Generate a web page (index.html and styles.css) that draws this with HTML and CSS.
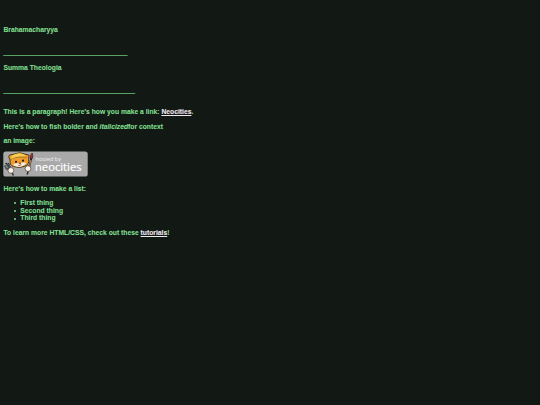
FILE: index.html
```html
<!DOCTYPE html>
<html lang="en">
<head>
    <meta charset="UTF-8">
    <meta name="viewport" content="width=device-width, initial-scale=1.0">
    <title>Brahamacharyya</title>
    <link rel="stylesheet" href="styles.css">
</head>
<body>
    <div class="entry">
        <h1>Brahamacharyya</h1>
        <p class="line">_________________________________</p>
    </div>
    <div class="entry">
        <h1>Summa Theologia</h1>
        <p class="line">___________________________________</p>
    </div>

    <p class="intro">This is a paragraph! Here's how you make a link: <a href="#">Neocities</a>.</p>
    <p>Here's how to fish bolder and <em>italicized</em>for context</p>
    <p>an image:</p>

    <svg class="badge" viewBox="0 0 85 26">
        <rect x="0.3" y="0.4" width="84.4" height="25.2" rx="2.6" fill="#a9a9a9"/>
        <!-- fork -->
        <path d="M2.8 12l4 6M1.8 14.5l1.5 3.2 3.2 1M5.2 12l2 4.5" fill="none" stroke="#182022" stroke-width="1.5"/>
        <path d="M3 12.8l3.6 5M2 15l1.4 3 3 .9M5.3 12.5l1.7 4" fill="none" stroke="#8795a0" stroke-width=".6"/>
        <!-- brush -->
        <path d="M28.6 6L26 17" stroke="#20191a" stroke-width="1.8"/>
        <path d="M27.9 9L26.3 16" stroke="#c98b4c" stroke-width="1"/>
        <path d="M27.1 7.5Q27 3.5 29.2 2Q30.8 5 28.9 8z" fill="#b92832" stroke="#241416" stroke-width=".6"/>
        <!-- cat -->
        <path d="M6.5 8Q5 5.5 6.5 4L11.5 3Q17 .5 21.5 3L26 4L25.6 8.5Q26.5 13.2 22 15.2Q16.5 17.6 10.5 15.6Q6.5 14 7.2 10z" fill="#ef9c2d" stroke="#30200e" stroke-width=".8"/>
        <path d="M8 8.3Q7.8 4.2 12 3.2Q18 1 22 4.2L23.3 6.4Q17 4.6 8 9z" fill="#f6ce52"/>
        <path d="M6.5 9.3Q14 4.6 23.8 6.4" fill="none" stroke="#95601b" stroke-width=".8"/>
        <path d="M10 13.3Q13 11.9 16 12.5Q20.5 10.8 23.3 12Q21.5 15 16.5 15.9Q12 16 10 13.3z" fill="#f6eee1"/>
        <circle cx="13" cy="10.8" r="1.1" fill="#241b18"/>
        <circle cx="20" cy="9.7" r="1.1" fill="#241b18"/>
        <path d="M15.9 12.1l1.9-.3-.7 1.1zM14.9 14.2q2 .8 3.6-.8" fill="#6c3222" stroke="#6c3222" stroke-width=".4"/>
        <!-- paws -->
        <path d="M9 21.5l1.4 3M25.2 20l-1 3.6" stroke="#272727" stroke-width="1.4"/>
        <circle cx="7.9" cy="19.4" r="2.9" fill="#fff3e8" stroke="#29221d" stroke-width=".6"/>
        <circle cx="25" cy="17.6" r="2.9" fill="#fff3e8" stroke="#29221d" stroke-width=".6"/>
        <text x="32.5" y="9.7" class="hosted" textLength="25.5" lengthAdjust="spacingAndGlyphs">hosted by</text>
        <text x="32" y="19.8" class="neocities" textLength="46.5" lengthAdjust="spacingAndGlyphs">neocities</text>
    </svg>

    <p>Here's how to make a list:</p>
    <ul>
        <li>First thing</li>
        <li>Second thing</li>
        <li>Third thing</li>
    </ul>
    <p>To learn more HTML/CSS, check out these <a href="#">tutorials</a>!</p>
</body>
</html>
```
FILE: styles.css
```css
body {
    margin: 0;
    padding: 25.7px 3.4px 0;
    background: #121814;
    color: #80df8f;
    font-family: "Liberation Sans", Arial, sans-serif;
    font-size: 6.75px;
    font-weight: bold;
    line-height: 7.6px;
    -webkit-text-stroke: 0.1px;
}

h1 {
    margin: 0;
    font-size: 6.75px;
}

p {
    margin: 6.7px 0;
}

.entry {
    height: 38px;
}

.entry .line {
    margin: 16px 0 0;
    color: #62b06d;
    -webkit-text-stroke: 0.5px #62b06d;
}

.intro {
    margin-top: 6.7px;
}

a {
    color: #efe8f0;
}

.badge {
    display: block;
    width: 85px;
    height: 26px;
    -webkit-text-stroke: 0;
}

.badge + p {
    margin-top: 7.6px;
}

.hosted {
    fill: #f2f2f2;
    font-family: "Open Sans", sans-serif;
    font-size: 5.6px;
    font-weight: normal;
}

.neocities {
    fill: #fff;
    stroke: #fff;
    stroke-width: 0.2;
    font-family: "Open Sans", sans-serif;
    font-size: 11.6px;
    font-weight: normal;
}

ul {
    margin: 6.7px 0;
    padding-left: 16.9px;
    list-style: none;
}

li {
    display: flex;
    align-items: center;
}

li::before {
    content: "";
    width: 2px;
    height: 2px;
    margin: 1px 4.2px 0 -6.2px;
    border-radius: 50%;
    background: #80df8f;
}
```
